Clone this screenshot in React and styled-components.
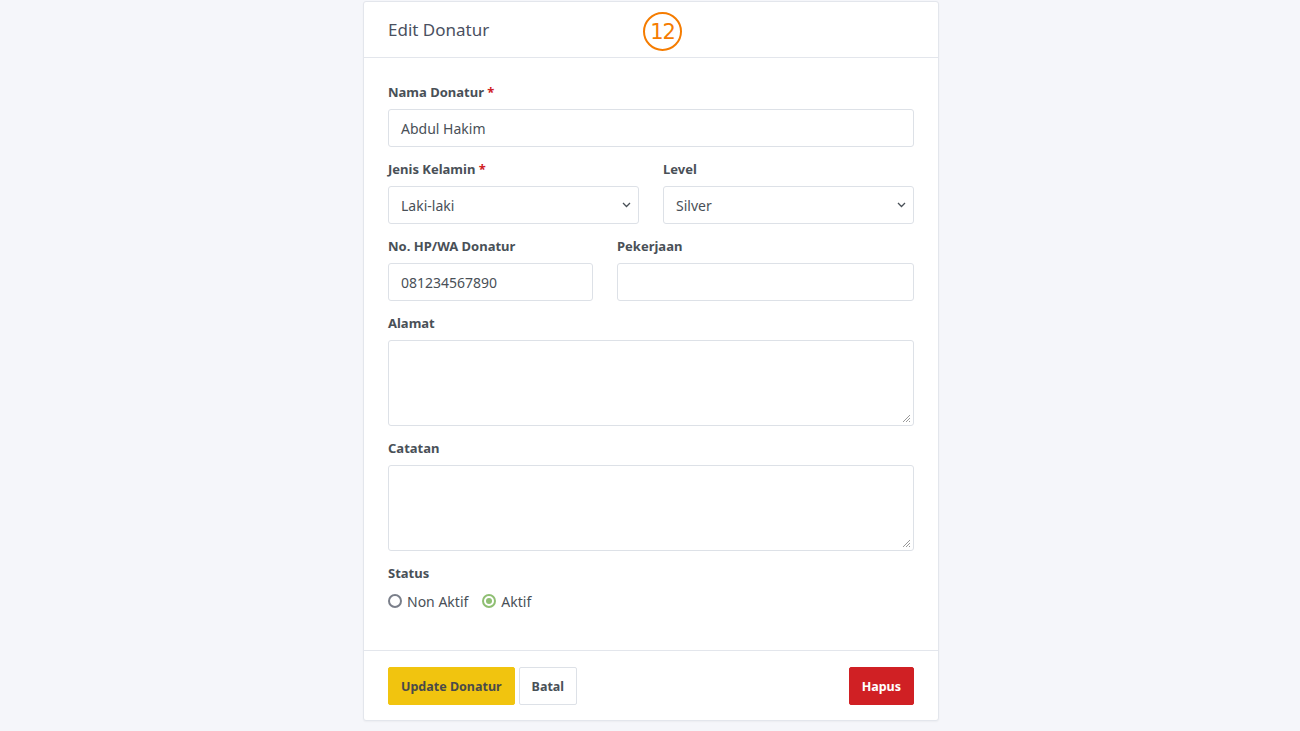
import React from "react";
import styled, { createGlobalStyle } from "styled-components";

const Global = createGlobalStyle`
  html, body { margin: 0; padding: 0; background: #f5f6fa; }
  body { font-family: "Noto Sans", "Open Sans", sans-serif; color: #495057; }
  * { box-sizing: border-box; }
`;

const Page = styled.div`
  display: flex;
  justify-content: center;
  align-items: flex-start;
  padding: 1px 0 0 2px;
  min-height: 731px;
`;

const Card = styled.div`
  position: relative;
  width: 576px;
  background: #fff;
  border: 1px solid #e3e6ec;
  border-radius: 3px;
  box-shadow: 0 1px 2px rgba(0,0,0,0.04);
`;

const Header = styled.div`
  height: 56px;
  padding: 0 24px;
  display: flex;
  align-items: center;
  border-bottom: 1px solid #e3e6ec;
  font-size: 17px;
  color: #4a5060;
`;

const Badge = styled.div`
  position: absolute;
  left: 279px;
  top: 10px;
  width: 39px;
  height: 39px;
  border-radius: 50%;
  border: 2.5px solid #f57c00;
  color: #f57c00;
  font-size: 21px;
  display: flex;
  align-items: center;
  justify-content: center;
  font-family: "DejaVu Sans", sans-serif;
  font-weight: 400;
  letter-spacing: -1px;
`;

const Body = styled.div`
  padding: 24px 24px 26px;
`;

const Group = styled.div`
  margin-bottom: 12px;
`;

const Row = styled.div`
  display: grid;
  grid-template-columns: ${p => p.$cols || "1fr 1fr"};
  column-gap: 24px;
`;

const Label = styled.div`
  font-size: 13px;
  font-weight: 700;
  line-height: 21px;
  margin-bottom: 6px;
  color: #495057;
`;

const Req = styled.span`
  color: #d02024;
`;

const Input = styled.div`
  height: 38px;
  border: 1px solid #dde1e7;
  border-radius: 3px;
  padding: 0 12px;
  display: flex;
  align-items: center;
  font-size: 14px;
  color: #495057;
  position: relative;
`;

const Area = styled(Input)`
  height: 86px;
`;

const Grip = styled.svg`
  position: absolute;
  right: 2px;
  bottom: 2px;
`;

const Chevron = styled.svg`
  margin-left: auto;
  margin-right: -5px;
`;

const Radios = styled.div`
  display: flex;
  align-items: center;
  gap: 14px;
  height: 22px;
  font-size: 14px;
`;

const RadioItem = styled.label`
  display: flex;
  align-items: center;
  gap: 5px;
  color: #495057;
`;

const RadioCircle = styled.span`
  width: 14px;
  height: 14px;
  border-radius: 50%;
  border: 2px solid ${p => (p.$on ? "#8fbf73" : "#7a7f8a")};
  display: flex;
  align-items: center;
  justify-content: center;
  &::after {
    content: "";
    width: 6px;
    height: 6px;
    border-radius: 50%;
    background: ${p => (p.$on ? "#8fbf73" : "transparent")};
  }
`;

const Footer = styled.div`
  border-top: 1px solid #e3e6ec;
  padding: 16px 24px 15px;
  display: flex;
  gap: 4px;
`;

const Button = styled.button`
  height: 38px;
  padding: 0 12px;
  border-radius: 2px;
  font-family: inherit;
  font-size: 12.5px;
  font-weight: 700;
  border: 1px solid ${p => p.$border};
  background: ${p => p.$bg};
  color: ${p => p.$color};
  margin-left: ${p => (p.$right ? "auto" : "0")};
`;

const Select = ({ value }) => (
  <Input>
    {value}
    <Chevron width="9" height="6" viewBox="0 0 9 6">
      <path d="M1 1l3.5 3.5L8 1" fill="none" stroke="#495057" strokeWidth="1.3" />
    </Chevron>
  </Input>
);

const TextArea = () => (
  <Area>
    <Grip width="9" height="9" viewBox="0 0 9 9">
      <path d="M8 1L1 8M8 4L4 8M8 7L7 8" stroke="#999" strokeWidth="1" />
    </Grip>
  </Area>
);

export default function App() {
  return (
    <>
      <Global />
      <Page>
        <Card>
          <Header>Edit Donatur</Header>
          <Badge>12</Badge>
          <Body>
            <Group>
              <Label>Nama Donatur <Req>*</Req></Label>
              <Input>Abdul Hakim</Input>
            </Group>
            <Row>
              <Group>
                <Label>Jenis Kelamin <Req>*</Req></Label>
                <Select value="Laki-laki" />
              </Group>
              <Group>
                <Label>Level</Label>
                <Select value="Silver" />
              </Group>
            </Row>
            <Row $cols="205px 1fr">
              <Group>
                <Label>No. HP/WA Donatur</Label>
                <Input>081234567890</Input>
              </Group>
              <Group>
                <Label>Pekerjaan</Label>
                <Input />
              </Group>
            </Row>
            <Group>
              <Label>Alamat</Label>
              <TextArea />
            </Group>
            <Group>
              <Label>Catatan</Label>
              <TextArea />
            </Group>
            <Group>
              <Label>Status</Label>
              <Radios>
                <RadioItem><RadioCircle />Non Aktif</RadioItem>
                <RadioItem><RadioCircle $on />Aktif</RadioItem>
              </Radios>
            </Group>
          </Body>
          <Footer>
            <Button $bg="#f1c40f" $border="#f1c40f" $color="#4a4a4a">Update Donatur</Button>
            <Button $bg="#fff" $border="#dde1e7" $color="#495057">Batal</Button>
            <Button $right $bg="#d02024" $border="#d02024" $color="#fff">Hapus</Button>
          </Footer>
        </Card>
      </Page>
    </>
  );
}
